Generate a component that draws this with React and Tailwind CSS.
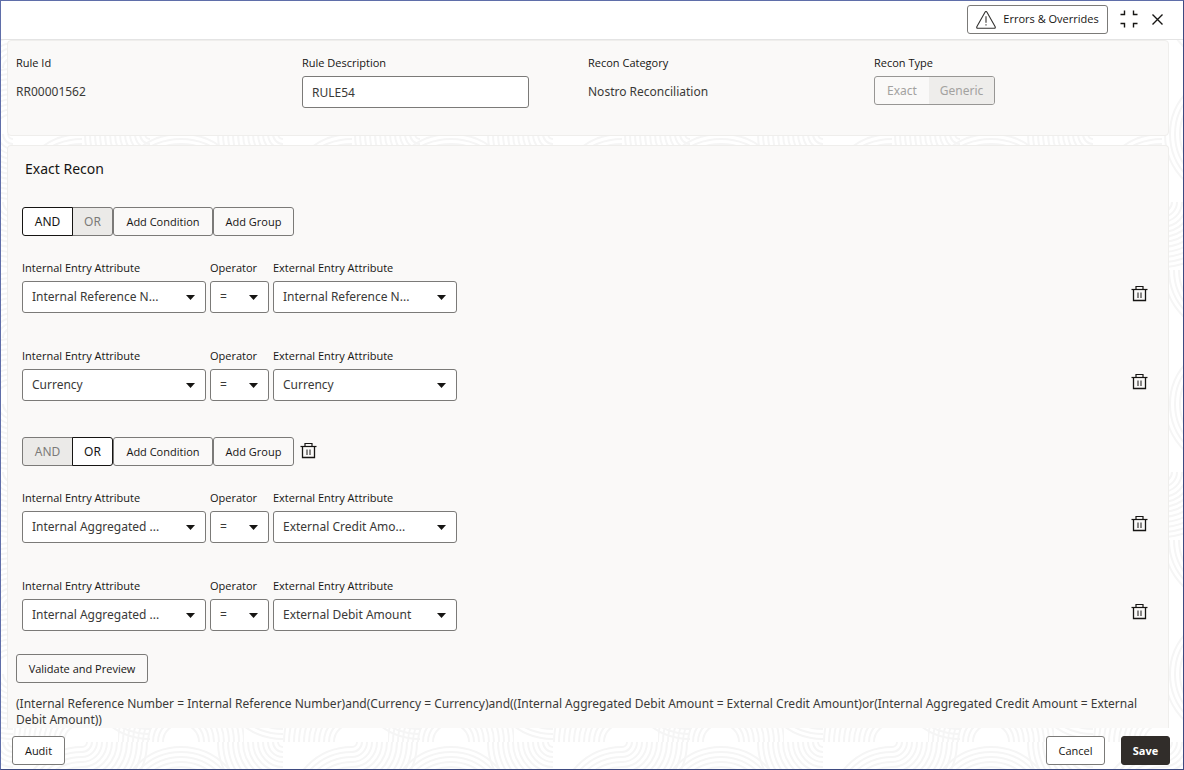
import { useId, useState } from "react";

function TrashIcon() {
  return (
    <svg width="17" height="17" viewBox="0 0 17 17" fill="none" stroke="#161513" aria-hidden="true">
      <path d="M0.5 4.5H16.5" strokeWidth="1.2" />
      <path d="M5 4.5V1.5H12V4.5" strokeWidth="1.2" />
      <path d="M2.5 5V15.5H14.5V5" strokeWidth="1.3" />
      <path d="M7 7.5V13M10 7.5V13" stroke="#4b4a48" strokeWidth="1.3" />
    </svg>
  );
}

function WarningIcon() {
  return (
    <svg className="shrink-0" width="20" height="18" viewBox="0 0 20 18" fill="none" stroke="#333230" strokeWidth="1.1" strokeLinejoin="round" aria-hidden="true">
      <path d="M9 1.2Q10 -0.2 11 1.2L19.2 15.8Q19.6 17.2 18.3 17.2H1.7Q0.4 17.2 0.8 15.8Z" />
      <path d="M10 5.2V11.8M10 13.2V14.6" />
    </svg>
  );
}

function CollapseIcon() {
  return (
    <svg width="18" height="18" viewBox="0 0 18 18" fill="none" stroke="#161513" strokeWidth="1.4" aria-hidden="true">
      <path d="M0.5 4.5H4.5V0.5M13.5 0.5V4.5H17.5M0.5 13.5H4.5V17.5M13.5 17.5V13.5H17.5" />
    </svg>
  );
}

function CloseIcon() {
  return (
    <svg width="11" height="11" viewBox="0 0 11 11" fill="none" stroke="#161513" strokeWidth="1.4" aria-hidden="true">
      <path d="M0.5 0.5L10.5 10.5M10.5 0.5L0.5 10.5" />
    </svg>
  );
}

/* Concentric arcs clipped to a rectangular cell of the tile. */
function Rings({ x, y, w, h, cx, cy, from = 5, to }) {
  const radii = [];
  for (let r = from; r <= to; r += 5) radii.push(r);
  return (
    <svg x={x} y={y} width={w} height={h}>
      {radii.map((r) => (
        <circle key={r} cx={cx} cy={cy} r={r} />
      ))}
    </svg>
  );
}

function Backdrop() {
  return (
    <svg className="absolute inset-0 h-full w-full" aria-hidden="true">
      <defs>
        <pattern id="waves" x="12" y="201" width="270" height="270" patternUnits="userSpaceOnUse">
          <g fill="none" stroke="#f5f5f5" strokeWidth="2">
            <Rings x={0} y={0} w={69} h={68} cx={69} cy={68} from={8} to={64} />
            <Rings x={69} y={0} w={68} h={68} cx={0} cy={0} to={66} />
            <Rings x={105} y={0} w={126} h={68} cx={63} cy={68} from={13} to={66} />
            <Rings x={203} y={0} w={67} h={68} cx={67} cy={0} to={66} />
            <Rings x={0} y={68} w={69} h={68} cx={0} cy={68} to={66} />
            <Rings x={69} y={68} w={134} h={68} cx={67} cy={0} to={66} />
            <Rings x={203} y={68} w={67} h={68} cx={67} cy={68} to={66} />
            <Rings x={0} y={136} w={69} h={66} cx={69} cy={0} to={66} />
            <Rings x={69} y={136} w={68} h={66} cx={68} cy={66} to={64} />
            <Rings x={171} y={136} w={60} h={66} cx={0} cy={66} to={64} />
            <Rings x={203} y={136} w={67} h={66} cx={67} cy={66} from={20} to={66} />
            {/* bottom tier: half dome, quarter bowl, full dome, quarter bowl */}
            <Rings x={0} y={202} w={69} h={68} cx={69} cy={68} from={18} to={68} />
            <Rings x={69} y={202} w={68} h={68} cx={68} cy={0} to={66} />
            <Rings x={105} y={202} w={126} h={68} cx={63} cy={68} from={18} to={68} />
            <Rings x={193} y={202} w={77} h={68} cx={77} cy={0} to={66} />
          </g>
        </pattern>
      </defs>
      <rect width="100%" height="100%" fill="url(#waves)" />
    </svg>
  );
}

function Button({ children, variant = "outline", className = "" }) {
  const look =
    variant === "solid"
      ? "border-[#312d2a] bg-[#312d2a] font-bold text-white"
      : variant === "filled"
        ? "border-[#7b7a78] bg-white text-[#161513]"
        : "border-[#7b7a78] bg-transparent text-[#161513]";
  return (
    <button
      type="button"
      className={`flex h-[29px] items-center justify-center rounded-[3px] border pt-px text-[11px] whitespace-nowrap ${look} ${className}`}
    >
      {children}
    </button>
  );
}

function TrashButton({ label }) {
  return (
    <button type="button" aria-label={label} className="flex">
      <TrashIcon />
    </button>
  );
}

function Select({ label, options, className }) {
  const id = useId();
  return (
    <div className={`flex flex-col gap-[5px] ${className}`}>
      <label htmlFor={id} className="text-[11px] leading-4 whitespace-nowrap">
        {label}
      </label>
      <div className="relative">
        <select
          id={id}
          className="h-8 w-full appearance-none rounded-[3px] border border-[#7b7a78] bg-white pr-4 pl-[9px] font-['Noto_Sans',sans-serif] text-xs text-[#3a3937]"
        >
          {options.map((o) => (
            <option key={o}>{o}</option>
          ))}
        </select>
        <svg
          className="pointer-events-none absolute top-[14px] right-[11px]"
          width="9"
          height="5"
          viewBox="0 0 9 5"
          fill="#161513"
          aria-hidden="true"
        >
          <path d="M0 0H9L4.5 5Z" />
        </svg>
      </div>
    </div>
  );
}

function ConditionRow({ internal, external }) {
  return (
    <div className="flex items-start justify-between">
      <div className="flex gap-1">
        <Select className="w-[184px]" label="Internal Entry Attribute" options={[internal]} />
        <Select className="w-[59px]" label="Operator" options={["="]} />
        <Select className="w-[184px]" label="External Entry Attribute" options={[external]} />
      </div>
      <div className="pt-[25px]">
        <TrashButton label="Delete condition" />
      </div>
    </div>
  );
}

function AndOrToggle({ initial }) {
  const [value, setValue] = useState(initial);
  const on = "border-[#161513] bg-white text-[#161513] z-10";
  const off = "border-[#7b7a78] bg-[#ebeae8] text-[#7b7a78]";
  return (
    <div role="group" aria-label="Logical operator" className="flex font-['Noto_Sans',sans-serif] text-xs">
      <button
        type="button"
        aria-pressed={value === "AND"}
        onClick={() => setValue("AND")}
        className={`relative h-[29px] w-[51px] rounded-l-[3px] border ${value === "AND" ? on : off}`}
      >
        AND
      </button>
      <button
        type="button"
        aria-pressed={value === "OR"}
        onClick={() => setValue("OR")}
        className={`relative -ml-px h-[29px] w-[41px] rounded-r-[3px] border ${value === "OR" ? on : off}`}
      >
        OR
      </button>
    </div>
  );
}

function ConditionGroup({ operator, conditions, removable }) {
  return (
    <section className="flex flex-col gap-6">
      <div className="flex items-center">
        <AndOrToggle initial={operator} />
        <Button className="w-[100px]">Add Condition</Button>
        <Button className="w-[81px]">Add Group</Button>
        {removable && (
          <div className="pb-0.5 pl-1.5">
            <TrashButton label="Delete group" />
          </div>
        )}
      </div>
      <div className="flex flex-col gap-[35px]">
        {conditions.map((c) => (
          <ConditionRow key={c.internal + c.external} {...c} />
        ))}
      </div>
    </section>
  );
}

function ReadOnlyField({ label, value }) {
  return (
    <dl>
      <dt className="text-[11px] leading-4">{label}</dt>
      <dd className="pt-[13px] font-['Noto_Sans',sans-serif] text-xs leading-4 text-[#3a3937]">{value}</dd>
    </dl>
  );
}

export default function App() {
  return (
    <div className="relative flex min-h-screen flex-col border border-t-[#5f6ea9] border-r-[#3e4a80] border-b-[#3e4a80] border-l-[#5f6ea9] bg-white font-['Open_Sans',sans-serif] text-[#161513]">
      <Backdrop />

      <header className="relative flex h-[39px] items-center justify-end border-b border-[#e4e4e4] bg-white pr-5 pb-0.5">
        <Button variant="filled" className="w-[141px] gap-[7px]">
          <WarningIcon />
          Errors &amp; Overrides
        </Button>
        <button type="button" aria-label="Exit full screen" className="ml-3 flex">
          <CollapseIcon />
        </button>
        <button type="button" aria-label="Close" className="ml-3.5 flex">
          <CloseIcon />
        </button>
      </header>

      <main className="relative flex flex-1 flex-col gap-[9px] pr-3.5 pl-1.5">
        <section className="grid h-24 grid-cols-4 rounded-[4px] border border-[#efeeec] bg-[#faf9f8] px-2 pt-3.5">
          <ReadOnlyField label="Rule Id" value="RR00001562" />
          <div className="flex flex-col gap-[5px]">
            <label htmlFor="rule-description" className="text-[11px] leading-4">
              Rule Description
            </label>
            <input
              id="rule-description"
              type="text"
              defaultValue="RULE54"
              className="h-8 w-[227px] rounded-[3px] border border-[#7b7a78] bg-white px-[9px] font-['Noto_Sans',sans-serif] text-xs text-[#3a3937]"
            />
          </div>
          <ReadOnlyField label="Recon Category" value="Nostro Reconciliation" />
          <div className="flex flex-col gap-[5px]">
            <span id="recon-type" className="text-[11px] leading-4">
              Recon Type
            </span>
            <div
              role="group"
              aria-labelledby="recon-type"
              className="flex h-[29px] w-[121px] overflow-hidden rounded-[3px] border border-[#979694] font-['Noto_Sans',sans-serif] text-xs text-[#a3a2a0]"
            >
              <button type="button" disabled aria-pressed="true" className="w-[54px]">
                Exact
              </button>
              <button type="button" disabled aria-pressed="false" className="flex-1 bg-[#eeedeb]">
                Generic
              </button>
            </div>
          </div>
        </section>

        <section className="flex flex-1 flex-col rounded-t-[4px] border border-b-0 border-[#efeeec] bg-[#faf9f8] px-2 pt-[13px]">
          <h2 className="pl-[9px] font-['Noto_Sans',sans-serif] text-sm leading-5">Exact Recon</h2>
          <div className="flex flex-col gap-9 pt-7 pr-3 pl-1.5">
            <ConditionGroup
              operator="AND"
              conditions={[
                { internal: "Internal Reference N...", external: "Internal Reference N..." },
                { internal: "Currency", external: "Currency" },
              ]}
            />
            <ConditionGroup
              operator="OR"
              removable
              conditions={[
                { internal: "Internal Aggregated ...", external: "External Credit Amo..." },
                { internal: "Internal Aggregated ...", external: "External Debit Amount" },
              ]}
            />
          </div>
          <div className="flex pt-[23px]">
            <Button className="w-[132px]">Validate and Preview</Button>
          </div>
          <p className="pt-[13px] font-['Noto_Sans',sans-serif] text-xs leading-4 text-[#3a3937]">
            (Internal Reference Number = Internal Reference Number)and(Currency = Currency)and((Internal Aggregated Debit
            Amount = External Credit Amount)or(Internal Aggregated Credit Amount = External Debit Amount))
          </p>
        </section>
      </main>

      <footer className="relative flex items-center pt-2 pr-[13px] pb-1 pl-[11px]">
        <Button variant="filled" className="w-[53px]">
          Audit
        </Button>
        <div className="ml-auto flex gap-4">
          <Button variant="filled" className="w-[59px]">
            Cancel
          </Button>
          <Button variant="solid" className="w-[49px]">
            Save
          </Button>
        </div>
      </footer>
    </div>
  );
}
